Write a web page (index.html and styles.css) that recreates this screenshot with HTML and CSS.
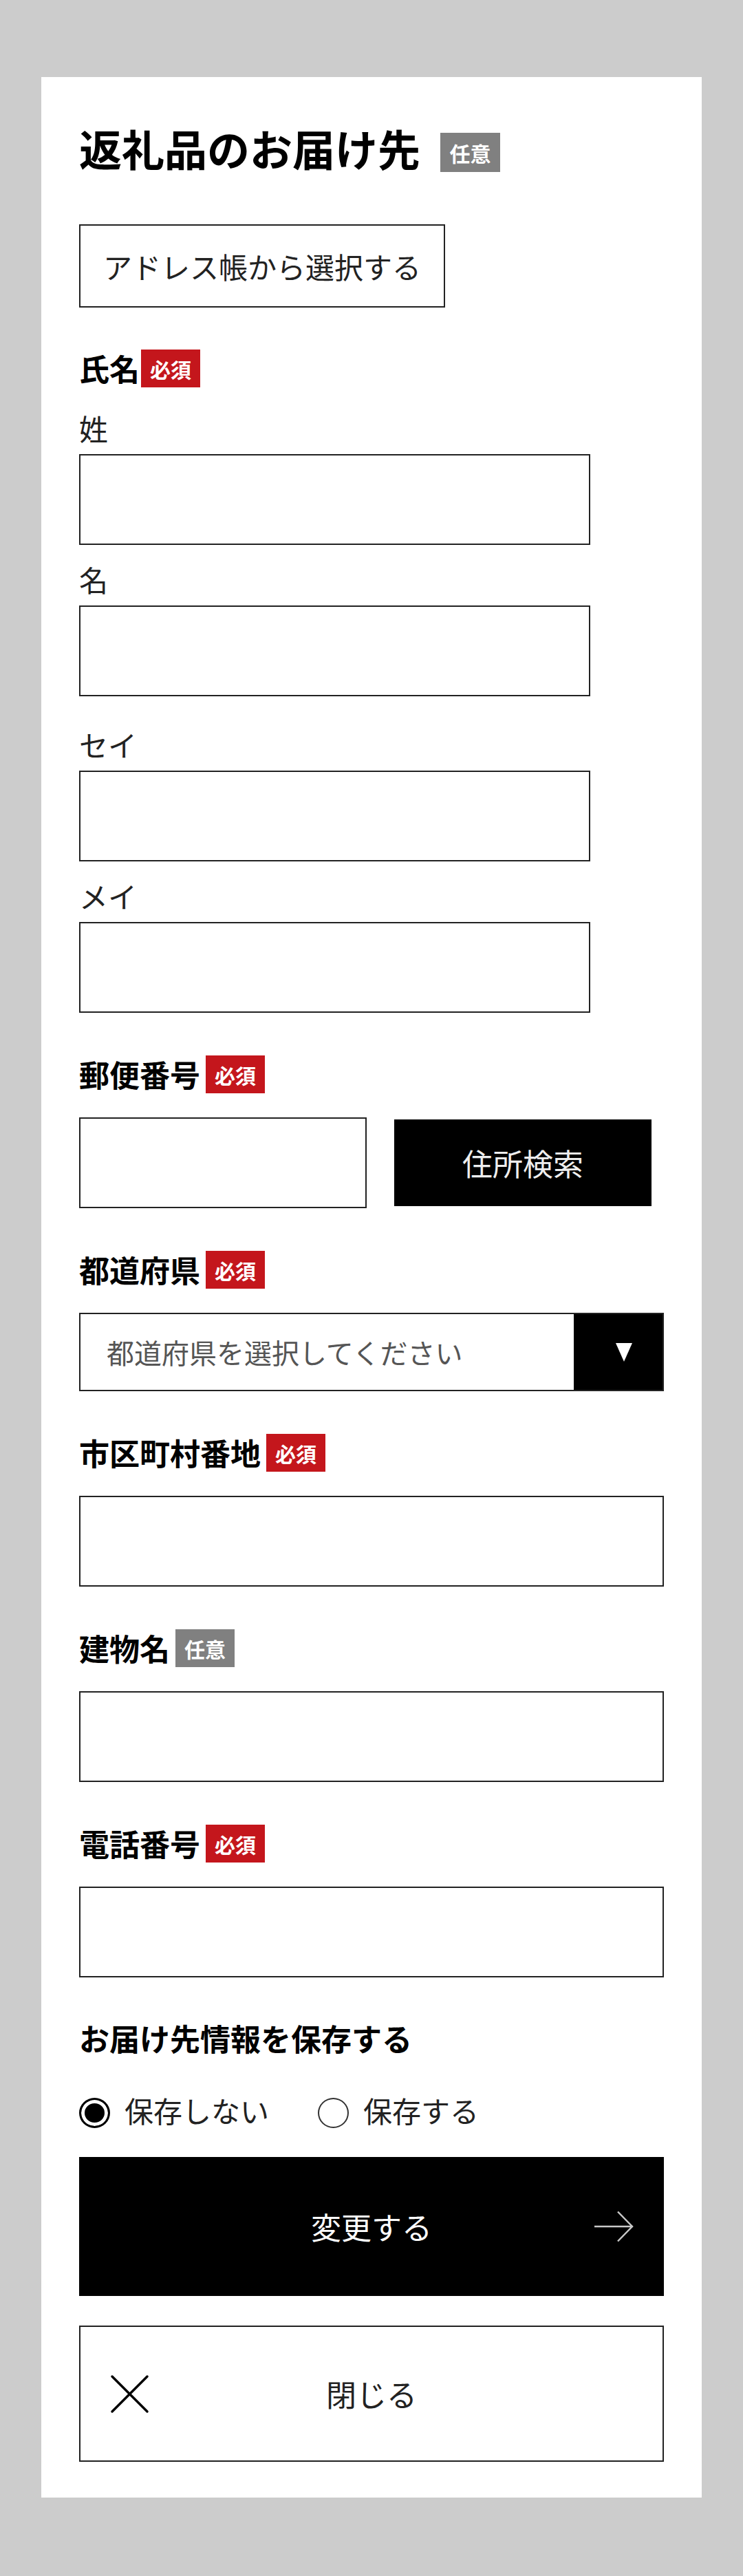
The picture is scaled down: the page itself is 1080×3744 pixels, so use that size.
FILE: index.html
```html
<!DOCTYPE html>
<html lang="ja">
<head>
<meta charset="utf-8">
<title>返礼品のお届け先</title>
<link rel="stylesheet" href="styles.css">
</head>
<body>
<div class="card">
  <div class="title-row">
    <h1 class="title">返礼品のお届け先</h1>
    <span class="badge badge-opt badge-title">任意</span>
  </div>

  <button class="btn-address" type="button">アドレス帳から選択する</button>

  <section class="section section-first">
    <div class="label-row label-row-tight"><span class="label">氏名</span><span class="badge badge-req">必須</span></div>
    <label class="sub-label sub-first">姓</label>
    <input class="input input-name" type="text">
    <label class="sub-label sub-next">名</label>
    <input class="input input-name" type="text">
    <label class="sub-label sub-group">セイ</label>
    <input class="input input-name" type="text">
    <label class="sub-label sub-next">メイ</label>
    <input class="input input-name" type="text">
  </section>

  <section class="section">
    <div class="label-row"><span class="label">郵便番号</span><span class="badge badge-req">必須</span></div>
    <div class="postal-row control">
      <input class="input input-postal" type="text">
      <button class="btn-search" type="button">住所検索</button>
    </div>
  </section>

  <section class="section">
    <div class="label-row"><span class="label">都道府県</span><span class="badge badge-req">必須</span></div>
    <div class="select control">
      <span class="select-text">都道府県を選択してください</span>
      <span class="select-arrow"><svg width="24" height="27" viewBox="0 0 24 27"><polygon points="0,0 24,0 12,27" fill="#fff"/></svg></span>
    </div>
  </section>

  <section class="section">
    <div class="label-row"><span class="label">市区町村番地</span><span class="badge badge-req">必須</span></div>
    <input class="input control" type="text">
  </section>

  <section class="section">
    <div class="label-row"><span class="label">建物名</span><span class="badge badge-opt">任意</span></div>
    <input class="input control" type="text">
  </section>

  <section class="section">
    <div class="label-row"><span class="label">電話番号</span><span class="badge badge-req">必須</span></div>
    <input class="input control" type="text">
  </section>

  <div class="save-label">お届け先情報を保存する</div>
  <div class="radio-row">
    <div class="radio"><span class="radio-circle checked"></span><span>保存しない</span></div>
    <div class="radio radio-second"><span class="radio-circle"></span><span>保存する</span></div>
  </div>

  <button class="btn-primary" type="button">
    <span></span>
    <span class="btn-text">変更する</span>
    <svg class="arrow" width="58" height="46" viewBox="0 0 58 46"><path d="M1 23 H55 M35 1.5 L56 23 L35 44.5" fill="none" stroke="#c8c8c8" stroke-width="2.5" stroke-linejoin="miter"/></svg>
  </button>

  <button class="btn-close" type="button">
    <svg class="xicon" width="57" height="57" viewBox="0 0 57 57"><path d="M3 3 L54 54 M54 3 L3 54" fill="none" stroke="#000" stroke-width="3.5" stroke-linecap="round"/></svg>
    <span class="btn-text">閉じる</span>
    <span></span>
  </button>
</div>
</body>
</html>
```

FILE: styles.css
```css
html {
  background: #cccccc;
}
body {
  margin: 0;
  padding: 112px 60px 116px;
  font-family: "Noto Sans CJK JP", "Noto Sans", sans-serif;
  color: #111;
}
button, input {
  font-family: inherit;
}
.card {
  background: #fff;
  padding: 60px 55px 52px;
}
.title-row {
  display: flex;
  align-items: center;
}
.title {
  margin: 0;
  font-size: 62px;
  line-height: 87px;
  font-weight: 700;
  color: #000;
}
.badge {
  display: inline-flex;
  align-items: center;
  justify-content: center;
  color: #fff;
  font-weight: 700;
  font-size: 30px;
  width: 86px;
  height: 55px;
  flex: none;
}
.badge-req {
  background: #c4161c;
}
.badge-opt {
  background: #808080;
}
.badge-title {
  width: 87px;
  height: 57px;
  margin-left: 29px;
  margin-top: 12px;
}
.btn-address {
  display: block;
  margin-top: 67px;
  height: 121px;
  padding: 0 33px;
  border: 2px solid #222;
  background: #fff;
  font-size: 42px;
  color: #222;
}
.section {
  margin-top: 62px;
}
.section-first {
  margin-top: 61px;
}
.label-row {
  display: flex;
  align-items: center;
  gap: 8px;
  height: 55px;
}
.label-row-tight {
  gap: 2px;
}
.label {
  font-size: 44px;
  line-height: 55px;
  font-weight: 700;
  color: #000;
}
.sub-label {
  display: block;
  font-size: 42px;
  line-height: 56px;
  margin-bottom: 10px;
  color: #222;
}
.sub-first {
  margin-top: 31px;
}
.sub-next {
  margin-top: 22px;
}
.sub-group {
  margin-top: 42px;
}
.input {
  display: block;
  box-sizing: border-box;
  width: 100%;
  height: 132px;
  margin: 0;
  border: 2px solid #222;
  background: #fff;
  padding: 0 30px;
  font-size: 40px;
}
.input-name {
  width: 743px;
}
.control {
  margin-top: 35px;
}
.postal-row {
  display: flex;
  align-items: center;
  gap: 40px;
}
.input-postal {
  width: 418px;
  flex: none;
}
.btn-search {
  width: 374px;
  height: 126px;
  border: 0;
  background: #000;
  color: #eee;
  font-size: 44px;
}
.select {
  display: flex;
  box-sizing: border-box;
  height: 114px;
  border: 2px solid #222;
}
.select-text {
  flex: 1;
  display: flex;
  align-items: center;
  padding-left: 38px;
  font-size: 40px;
  color: #555;
}
.select-arrow {
  width: 129px;
  background: #000;
  display: flex;
  align-items: center;
  justify-content: center;
  padding-left: 16px;
  box-sizing: border-box;
}
.save-label {
  margin-top: 60px;
  font-size: 44px;
  line-height: 56px;
  font-weight: 700;
  color: #000;
}
.radio-row {
  margin-top: 48px;
  height: 56px;
  display: flex;
  align-items: center;
}
.radio {
  display: flex;
  align-items: center;
  gap: 21px;
  font-size: 42px;
  color: #222;
}
.radio-second {
  margin-left: 71px;
}
.radio-circle {
  width: 45px;
  height: 44px;
  border-radius: 50%;
  box-sizing: border-box;
  border: 2px solid #333;
  background: #fff;
  margin-top: 10px;
}
.radio-circle.checked {
  border: 3px solid #000;
  background: #000;
  box-shadow: inset 0 0 0 5px #fff;
}
.btn-primary,
.btn-close {
  display: grid;
  grid-template-columns: 1fr auto 1fr;
  align-items: center;
  width: 100%;
  box-sizing: border-box;
  font-size: 44px;
}
.btn-primary {
  margin-top: 41px;
  height: 202px;
  padding: 0 44px;
  border: 0;
  background: #000;
  color: #fff;
}
.btn-primary .arrow {
  justify-self: end;
}
.btn-close {
  margin-top: 43px;
  height: 198px;
  padding: 0 43px;
  border: 2px solid #222;
  background: #fff;
  color: #222;
}
.btn-close .xicon {
  justify-self: start;
}
```
